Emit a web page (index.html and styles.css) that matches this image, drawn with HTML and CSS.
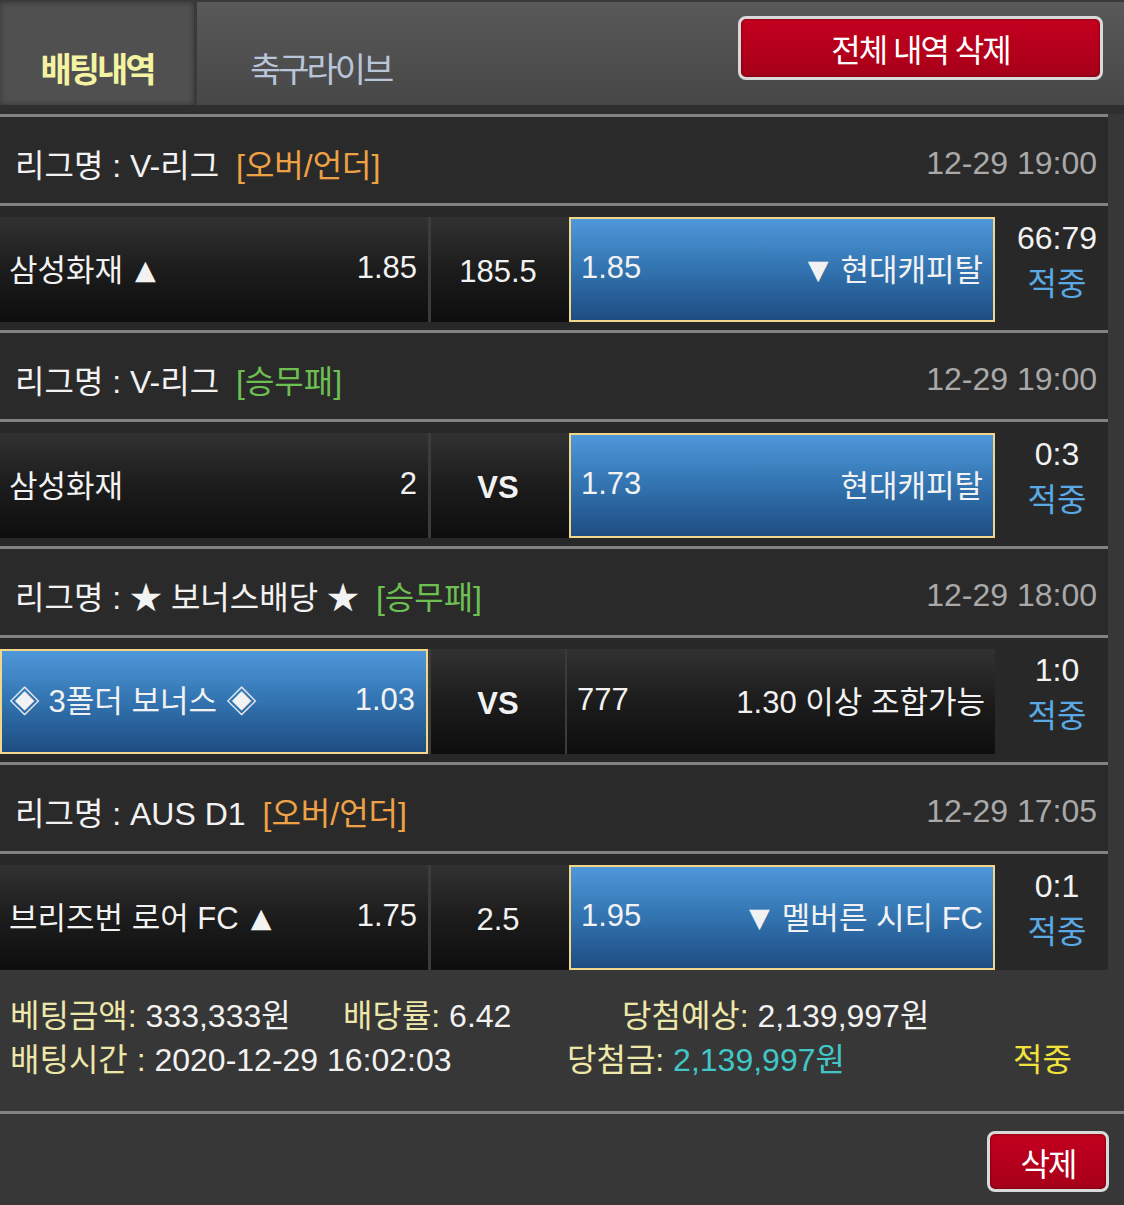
FILE: index.html
```html
<!DOCTYPE html>
<html lang="ko">
<head>
  <meta charset="UTF-8">
  <meta name="viewport" content="width=device-width, initial-scale=1.0">
  <title>배팅내역</title>
  <link rel="stylesheet" href="styles.css">
</head>
<body>

  <!-- 상단 탭 -->
  <div class="top">
    <div class="tab on">배팅내역</div>
    <div class="tab">축구라이브</div>
    <button class="btn-red btn-all">전체 내역 삭제</button>
  </div>

  <div class="games">

    <div class="league">
      <span>리그명 : V-리그 <em class="ou">[오버/언더]</em></span>
      <span class="time">12-29 19:00</span>
    </div>
    <div class="match">
      <div class="cells">
        <div class="home"><span>삼성화재<i class="arr up">▲</i></span><span>1.85</span></div>
        <div class="mid">185.5</div>
        <div class="away pick"><span>1.85</span><span><i class="arr down">▼</i>현대캐피탈</span></div>
      </div>
      <div class="result"><div>66:79</div><div class="hit">적중</div></div>
    </div>

    <div class="league">
      <span>리그명 : V-리그 <em class="wdl">[승무패]</em></span>
      <span class="time">12-29 19:00</span>
    </div>
    <div class="match">
      <div class="cells">
        <div class="home"><span>삼성화재</span><span>2</span></div>
        <div class="mid vs">VS</div>
        <div class="away pick"><span>1.73</span><span>현대캐피탈</span></div>
      </div>
      <div class="result"><div>0:3</div><div class="hit">적중</div></div>
    </div>

    <div class="league">
      <span>리그명 : ★ 보너스배당 ★ <em class="wdl">[승무패]</em></span>
      <span class="time">12-29 18:00</span>
    </div>
    <div class="match">
      <div class="cells">
        <div class="home pick"><span>◈ 3폴더 보너스 ◈</span><span>1.03</span></div>
        <div class="mid vs">VS</div>
        <div class="away"><span>777</span><span>1.30 이상 조합가능</span></div>
      </div>
      <div class="result"><div>1:0</div><div class="hit">적중</div></div>
    </div>

    <div class="league">
      <span>리그명 : AUS D1 <em class="ou">[오버/언더]</em></span>
      <span class="time">12-29 17:05</span>
    </div>
    <div class="match">
      <div class="cells">
        <div class="home"><span>브리즈번 로어 FC<i class="arr up">▲</i></span><span>1.75</span></div>
        <div class="mid">2.5</div>
        <div class="away pick"><span>1.95</span><span><i class="arr down">▼</i>멜버른 시티 FC</span></div>
      </div>
      <div class="result"><div>0:1</div><div class="hit">적중</div></div>
    </div>

  </div>

  <!-- 배팅 요약 -->
  <div class="summary">
    <div class="line">
      <span class="c1"><b>베팅금액:</b> 333,333원</span>
      <span class="c2"><b>배당률:</b> 6.42</span>
      <span><b>당첨예상:</b> 2,139,997원</span>
    </div>
    <div class="line">
      <span class="c3"><b>배팅시간 :</b> 2020-12-29 16:02:03</span>
      <span class="c4"><b>당첨금:</b> <i class="won">2,139,997원</i></span>
      <span class="state">적중</span>
    </div>
  </div>

  <div class="foot">
    <button class="btn-red btn-one">삭제</button>
  </div>

</body>
</html>
```

FILE: styles.css
```css
body {
  margin: 0;
  background: #373737;
  font-family: "Liberation Sans", "Noto Sans CJK KR", sans-serif;
  color: #f2f2f2;
}
.top {
  display: flex;
  align-items: flex-start;
  height: 103px;
  border-top: 2px solid #3a3a3a;
  border-bottom: 9px solid #2f2f2f;
  background: linear-gradient(#595959, #474747);
}
.tab {
  height: 103px;
  box-sizing: border-box;
  padding-top: 46px;
  line-height: 44px;
  font-size: 34px;
  letter-spacing: -3px;
  color: #b9c5d8;
  padding-left: 53px;
}
.tab.on {
  width: 197px;
  padding-left: 0;
  text-align: center;
  font-weight: bold;
  color: #f3f3a2;
  background: #505050;
  border-right: 3px solid #3a3a3a;
  box-shadow: inset 0 0 6px rgba(0, 0, 0, 0.35);
}
.btn-red {
  font-family: inherit;
  font-size: 32px;
  letter-spacing: -2px;
  color: #fff;
  background: linear-gradient(#c4001f, #a60018);
  border: 3px solid #d9d9d9;
  border-radius: 8px;
  box-shadow: inset 0 0 3px rgba(0, 0, 0, 0.5);
  padding: 0;
}
.btn-all {
  margin: 14px 21px 0 auto;
  width: 365px;
  height: 64px;
}
.games {
  width: 1108px;
  border-top: 3px solid #828282;
}
.league {
  display: flex;
  justify-content: space-between;
  align-items: center;
  height: 80px;
  padding: 6px 11px 0 15px;
  background: #2a2a2a;
  border-bottom: 3px solid #828282;
  font-size: 32px;
}
.league em {
  font-style: normal;
  margin-left: 8px;
}
.ou {
  color: #eea245;
}
.wdl {
  color: #6dbf52;
}
.time {
  color: #a9a9a9;
}
.match {
  display: flex;
  background: #282828;
  border-bottom: 3px solid #828282;
}
.match:last-child {
  border-bottom: none;
}
.cells {
  display: flex;
  width: 995px;
  height: 105px;
  margin: 11px 0 8px;
  background: linear-gradient(#323232, #1c1c1c 50%, #0e0e0e);
  font-size: 31px;
}
.match:last-child .cells {
  margin-bottom: 0;
}
.home,
.away {
  display: flex;
  justify-content: space-between;
  align-items: center;
  box-sizing: border-box;
  padding-bottom: 4px;
}
.home {
  width: 428px;
  padding-left: 9px;
  padding-right: 11px;
}
.arr {
  font-style: normal;
  font-family: "DejaVu Sans", sans-serif;
  font-size: 27px;
  vertical-align: 2px;
}
.arr.up {
  margin-left: 12px;
}
.arr.down {
  margin-right: 12px;
}
.mid {
  width: 134px;
  border-left: 3px solid #3b3b3b;
  display: flex;
  justify-content: center;
  align-items: center;
  padding-top: 4px;
}
.vs {
  font-weight: bold;
}
.away {
  width: 430px;
  border-left: 2px solid #3b3b3b;
  padding-left: 10px;
  padding-right: 10px;
}
.pick {
  background: linear-gradient(#4f98da, #3273b0 50%, #1d4d82);
  border: 2px solid #f2d78b;
}
.home.pick {
  padding-left: 7px;
}
.away.pick {
  width: 426px;
  margin-left: 4px;
}
.result {
  flex: 1;
  padding: 9px 0 0 11px;
  text-align: center;
  font-size: 32px;
  line-height: 46px;
}
.hit {
  color: #5aa9e4;
}
.summary {
  padding: 24px 0 29px 10px;
  border-bottom: 3px solid #828282;
  font-size: 32px;
  line-height: 44px;
}
.line {
  display: flex;
}
.summary b {
  font-weight: normal;
  color: #ede7a9;
}
.c1 {
  width: 333px;
}
.c2 {
  width: 279px;
}
.c3 {
  width: 557px;
}
.c4 {
  width: 446px;
}
.won {
  font-style: normal;
  color: #41c7c7;
}
.state {
  color: #f1e23c;
}
.foot {
  display: flex;
  justify-content: flex-end;
  padding: 17px 15px 0 0;
}
.btn-one {
  width: 122px;
  height: 61px;
}
```
